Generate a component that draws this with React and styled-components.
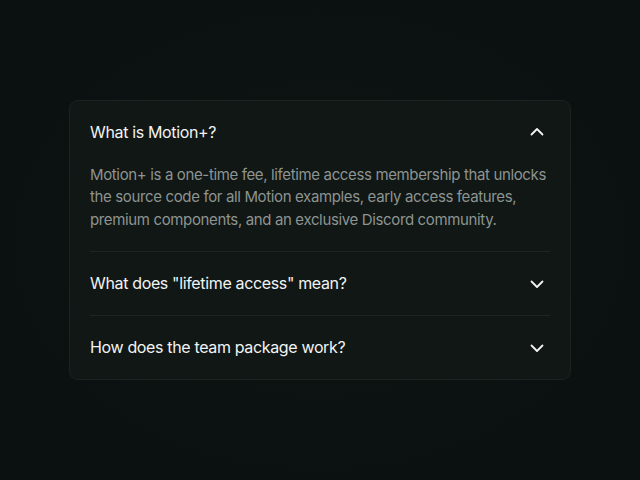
import React, { useState } from 'react'
import styled, { createGlobalStyle } from 'styled-components'

const GlobalStyle = createGlobalStyle`
  html, body, #root {
    margin: 0;
    height: 100%;
  }
  body {
    background: #0b1110;
    font-family: Inter, "Noto Sans", sans-serif;
  }
`;

const items = [
  {
    q: 'What is Motion+?',
    a: 'Motion+ is a one-time fee, lifetime access membership that unlocks the source code for all Motion examples, early access features, premium components, and an exclusive Discord community.',
  },
  {
    q: 'What does "lifetime access" mean?',
    a: 'You pay once and get access to everything in Motion+, including all future updates.',
  },
  {
    q: 'How does the team package work?',
    a: 'The team package gives every member of your team access to Motion+.',
  },
];

const Chevron = ({ open }) => (
  <ChevronSvg width="16" height="16" viewBox="0 0 16 16" $open={open}>
    <path d="M2.5 5.5 L8 11 L13.5 5.5" fill="none" stroke="#f2f4f3" strokeWidth="1.8" strokeLinecap="round" strokeLinejoin="round" />
  </ChevronSvg>
);

export default function App() {
  const [open, setOpen] = useState(0);
  return (
    <>
      <GlobalStyle />
      <Page>
        <Card>
          {items.map((item, i) => (
            <Item key={i} $first={i === 0}>
              <Question onClick={() => setOpen(open === i ? -1 : i)}>
                <span>{item.q}</span>
                <Chevron open={open === i} />
              </Question>
              {open === i && <Answer>{item.a}</Answer>}
            </Item>
          ))}
        </Card>
      </Page>
    </>
  );
}

const Page = styled.div`
  height: 100%;
  display: flex;
  align-items: center;
  justify-content: center;
  background: radial-gradient(ellipse at center, #0f1614 0%, #0b1110 70%);
`;

const Card = styled.div`
  box-sizing: border-box;
  width: 502px;
  padding: 0 20px;
  background: #101715;
  border: 1px solid #1b2220;
  border-radius: 9px;
`;

const Item = styled.div`
  border-top: ${p => (p.$first ? 'none' : '1px solid #1d2422')};
`;

const Question = styled.button`
  width: 100%;
  display: flex;
  align-items: center;
  justify-content: space-between;
  padding: 20px 5px 20px 0;
  margin: 0;
  background: none;
  border: none;
  cursor: pointer;
  color: #f2f4f3;
  font-family: inherit;
  font-size: 16px;
  letter-spacing: -0.35px;
  line-height: 23px;
  text-align: left;
`;

const ChevronSvg = styled.svg`
  flex-shrink: 0;
  transform: ${p => (p.$open ? 'rotate(180deg)' : 'none')};
`;

const Answer = styled.p`
  margin: 0;
  padding: 0 0 20px;
  color: #8d9491;
  font-size: 15px;
  letter-spacing: -0.36px;
  line-height: 22.5px;
`;
